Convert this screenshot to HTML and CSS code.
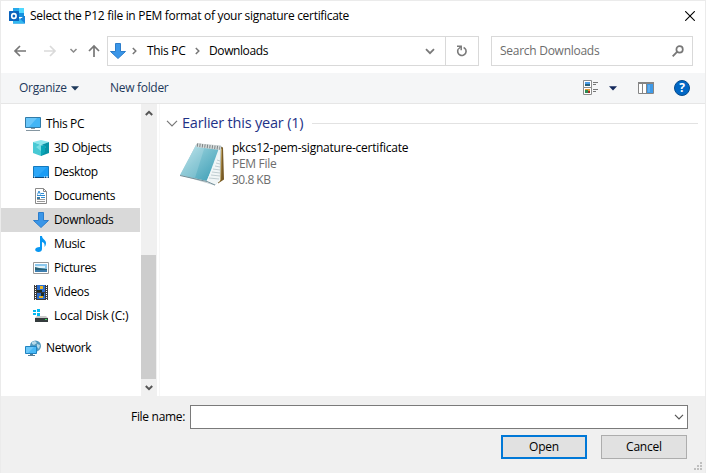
FILE: index.html
```html
<!DOCTYPE html>
<html lang="en">
<head>
<meta charset="utf-8">
<title>Select file</title>
<link rel="stylesheet" href="styles.css">
</head>
<body>
<div class="dialog">
  <header class="titlebar">
    <svg class="app-icon" width="16" height="16" viewBox="0 0 16 16"><path fill="#1490df" d="M4 0h11v9H4z"/><path fill="#28a8ea" d="M4 0h6v4H4z"/><path fill="#50d9ff" d="M10 0h5v5h-5z"/><path fill="#0364b8" d="M4 4h6v4H4z"/><path fill="#123b6d" d="M4 8l6 4 6-4v3H4z"/><path fill="#1784d9" d="M4 15l12-7v7.6H4z"/><path fill="#32b8f0" d="M4 13l6-3 6 5.6H4z"/><rect y="3" width="10" height="10" rx=".6" fill="#0a63bd"/><ellipse cx="4.9" cy="8" rx="2.2" ry="2.4" fill="none" stroke="#fff" stroke-width="1.6"/></svg>
    <h1 class="title">Select the P12 file in PEM format of your signature certificate</h1>
    <svg class="close" width="10" height="10" viewBox="0 0 10 10"><path d="M.2.2l9.6 9.6M9.8.2L.2 9.8" stroke="#000" stroke-width="1.1"/></svg>
  </header>

  <nav class="navbar">
    <svg class="arrows" width="90" height="16" viewBox="0 0 90 16" fill="none"><path d="M13 8H2M7 3L2 8l5 5" stroke="#777" stroke-width="1.7"/><path d="M31 8h11M37 3l5 5-5 5" stroke="#dadada" stroke-width="1.7"/><path d="M57.5 6l3 3 3-3" stroke="#8a8a8a" stroke-width="1.5"/><path d="M81 14V3M76 8l5-5 5 5" stroke="#777" stroke-width="1.7"/></svg>
    <div class="address">
      <svg class="down-arrow" width="16" height="16" viewBox="0 0 16 16"><path d="M5.5.5h5v8h5L8 15.5.5 8.500h5z" fill="#3a96e8" stroke="#2c7dcb"/></svg>
      <svg class="crumb-sep sep-first" width="5" height="8" viewBox="0 0 5 8"><path d="M.8 1l3 3-3 3" fill="none" stroke="#777" stroke-width="1.5"/></svg>
      <span class="crumb pc">This PC</span>
      <svg class="crumb-sep" width="5" height="8" viewBox="0 0 5 8"><path d="M.8 1l3 3-3 3" fill="none" stroke="#777" stroke-width="1.5"/></svg>
      <span class="crumb dl">Downloads</span>
      <svg class="address-caret" width="10" height="7" viewBox="0 0 10 7"><path d="M1 1.200l4 4 4-4" fill="none" stroke="#7a7a7a" stroke-width="1.8"/></svg>
      <span class="refresh"><svg width="12" height="12" viewBox="0 0 12 12"><path d="M7.600 2.400A4.200 4.200 0 1 1 2.200 4.200" fill="none" stroke="#7a7a7a" stroke-width="1.600"/><path d="M1 1.200h4.200V5.200" stroke="#7a7a7a" stroke-width="1.500" fill="none"/><path d="M2.200 4.200L5 1.500" stroke="#7a7a7a" stroke-width="1.200"/></svg></span>
    </div>
    <div class="search">
      <span class="placeholder">Search Downloads</span>
      <svg width="12" height="12" viewBox="0 0 12 12"><circle cx="7.600" cy="4.400" r="3.200" fill="none" stroke="#777" stroke-width="1.700"/><path d="M5.300 6.700L.7 11.300" stroke="#777" stroke-width="1.900"/></svg>
    </div>
  </nav>

  <div class="toolbar">
    <span class="tool organize">Organize</span>
    <svg class="organize-caret" width="8" height="5" viewBox="0 0 8 5"><path d="M0 .3h8L4 4.600z" fill="#1e395b"/></svg>
    <span class="tool new-folder">New folder</span>
    <svg class="view-icon" width="16" height="16" viewBox="0 0 16 16"><path d="M.5.5h8v7h-8zM.5 7.500h8v7h-8z" fill="#fff" stroke="#8c8c8c"/><path fill="#4d9de8" d="M2 2h5v2H2z"/><path fill="#26617c" d="M2 4h5v2H2z"/><path fill="#e29b34" d="M2 9h5v4H2z"/><path fill="#2c8b52" d="M2 10h3v3H2z"/><path fill="#a12e28" d="M5 11h2v2H5z"/><path d="M10 2.500h5M10 4.500h3M10 9.500h5M10 11.500h3" stroke="#777"/></svg>
    <svg class="view-caret" width="8" height="5" viewBox="0 0 8 5"><path d="M0 .3h8L4 4.600z" fill="#14295c"/></svg>
    <svg class="pane-icon" width="16" height="12" viewBox="0 0 16 12"><path fill="#fff" stroke="#858585" d="M.5.5h15v11H.5z"/><path fill="#858585" d="M0 0h16v2H0zM4 2h1v9H4zM8 2h1v9H8z"/><path fill="#3e9ae8" d="M9 2h6v9H9z"/><path fill="#5fadf0" d="M10 3h2v7h-2z"/></svg>
    <span class="help">?</span>
  </div>

  <main class="content">
    <aside class="sidebar">
      <ul class="tree">
        <li class="node root"><svg width="16" height="16" viewBox="0 0 16 16"><path fill="#43b5f5" stroke="#317ba8" d="M.5 1.500h15v10H.5z"/><path fill="#85d2fb" d="M1 2h11L4 11H1z" opacity=".6"/><path fill="#8596a1" d="M6 12h4v1H6zM1 14h14v1H1z"/></svg><span>This PC</span></li>
        <li class="node"><svg width="16" height="16" viewBox="0 0 16 16"><path fill="#8be6ed" d="M0 2l8-2 8 2-8 3z"/><path fill="#48c9d4" d="M0 2l8 3v11l-8-3z"/><path fill="#0792a5" d="M16 2L8 5v11l8-3z"/><path fill="#a4f0f3" d="M3 7l5-3 5 3-5 4z" opacity=".55"/><path fill="#0aa6b8" d="M8 6l4-1v7l-4 4z"/></svg><span>3D Objects</span></li>
        <li class="node"><svg width="16" height="16" viewBox="0 0 16 16"><path fill="#1a9cf5" stroke="#1479bd" d="M.5 2.500h15v11H.5z"/><path fill="#3fb1fb" d="M1 3h13L5 12H1z" opacity=".5"/><path fill="#0a477c" d="M0 13h16v1H0z"/><path fill="#fff" d="M1 12.500h1v1H1zM11 12.500h1v1h-1zM13 12.500h2v1h-2z"/></svg><span>Desktop</span></li>
        <li class="node"><svg width="16" height="16" viewBox="0 0 16 16"><path fill="#fff" stroke="#8a8a8a" d="M2.500.5h8l3 3v12h-11z"/><path fill="none" stroke="#8a8a8a" d="M10.500.5v3h3"/><path d="M4.500 6.500L6 3l1.500 3.500M8 5.500h3M4 7.500h8M8 9.500h4" fill="none" stroke="#2e8bd3"/><path fill="#39799f" d="M4 9h3v2H4z"/><path d="M4 11.500h8M4 13.500h8" stroke="#999"/></svg><span>Documents</span></li>
        <li class="node selected"><svg width="16" height="16" viewBox="0 0 16 16"><path d="M5.500.5h5v8h5L8 15.500.5 8.500h5z" fill="#3a96e8" stroke="#2c7dcb"/></svg><span>Downloads</span></li>
        <li class="node"><svg width="16" height="16" viewBox="0 0 16 16"><path fill="#0897f2" d="M7 0h2c0 3 4 4 4 7 0 2-.8 3-1.500 4C12 8 11 6.500 9 6v7c0 2-1.500 3-3.500 3S2 15 2.200 13.500 4 11 7 11z"/></svg><span>Music</span></li>
        <li class="node"><svg width="16" height="16" viewBox="0 0 16 16"><path fill="#fff" stroke="#999" d="M.5 2.500h15v11H.5z"/><path fill="#8cc8ee" d="M2 4h12v8H2z"/><path fill="#e0f2fa" d="M2 6h10v2H2z"/><path fill="#286074" d="M2 7l4 1 8 1v1H2z"/><path fill="#3d7eae" d="M2 10h12v2H2z"/></svg><span>Pictures</span></li>
        <li class="node"><svg width="16" height="16" viewBox="0 0 16 16"><path fill="#3c3c3c" d="M1 1h14v15H1z"/><path fill="#2b6dcd" d="M4 1h8v7H4zM4 9h8v6H4z"/><path fill="#e5b528" d="M7 2h3v3H7zM6 12h4v2H6z"/><path fill="#1b2d28" d="M4 6h5v2H4zM8 9h3v3H8z"/><path d="M2.500 1v15M13.500 1v15" stroke="#fff" stroke-dasharray="1 1"/></svg><span>Videos</span></li>
        <li class="node disk"><svg width="16" height="16" viewBox="0 0 16 16"><path fill="#04b9f1" d="M0 2h3v2H0zM4 1h3v3H4zM0 5h3v2H0zM4 5h3v3H4z"/><path fill="#c9c9c9" d="M4 8h9l2 2H2z"/><path fill="#343b3d" d="M2 10h13v4H2z"/><path fill="#37e35b" d="M12 11h2v1h-2z"/></svg><span>Local Disk (C:)</span></li>
        <li class="node root network"><svg width="16" height="16" viewBox="0 0 16 16"><circle cx="10.500" cy="6" r="5.500" fill="#5198bd"/><path fill="#b9dae9" d="M7 2l3-1 2 2-3 2-2-1zM12 4l3 1-1 4-2-2z"/><path fill="#48b8f6" stroke="#2083c0" d="M.5 6.500h11v7H.5z"/><path fill="#8bd6fb" d="M1 7h8l-6 6H1z" opacity=".55"/><path fill="#527e99" d="M5 14h3v1H5zM3 15h7v1H3z"/></svg><span>Network</span></li>
      </ul>
    </aside>
    <div class="scrollbar">
      <svg class="scroll-btn" width="8" height="6" viewBox="0 0 8 6"><path d="M.8 5L4 1.800 7.200 5" fill="none" stroke="#555" stroke-width="2"/></svg>
      <div class="thumb"></div>
      <svg class="scroll-btn" width="8" height="6" viewBox="0 0 8 6"><path d="M.8 1L4 4.200 7.200 1" fill="none" stroke="#555" stroke-width="2"/></svg>
    </div>
    <section class="files">
      <div class="group">
        <svg width="12" height="7" viewBox="0 0 12 7"><path d="M1 .8l5 5 5-5" fill="none" stroke="#777" stroke-width="1.200"/></svg>
        <h2 class="group-name">Earlier this year (1)</h2>
        <span class="rule"></span>
      </div>
      <article class="file">
        <svg width="46" height="44" viewBox="0 0 46 44">
          <defs><linearGradient id="cover" x1="0" y1="0" x2="1" y2="1"><stop offset="0" stop-color="#b9e3eb"/><stop offset=".45" stop-color="#79c0cf"/><stop offset="1" stop-color="#389bb4"/></linearGradient></defs>
          <path fill="#795c27" d="M39 4l4 1.500 1 32-6 4z"/><path fill="#c9a453" d="M39 6l3 1-1 31-4 3z"/>
          <path fill="#eef4f5" stroke="#9eadb2" stroke-width=".6" d="M17 2l24 2-1 34-5 5L1 33z"/>
          <path fill="url(#cover)" d="M16 3l23 3-12 33L0 33z"/>
          <path fill="#fff" opacity=".16" d="M16 3l9 1-10 32-15-3z"/>
          <path fill="#f1f6f7" d="M39 12l1 27-5 4-9-3z"/>
          <path d="M37 18l3 1M36 21l4 1M35 24l5 1M33 27l7 1M32 30l8 1M31 33l9 1M29 36l10 1" stroke="#b4c3c8" stroke-width=".8"/>
          <path fill="#d8dddd" d="M17 1l23 3v4L16 5z"/>
          <path d="M17 3l23 3" stroke="#7b8385" stroke-width="3.500" stroke-dasharray="1 1.500"/>
          <path d="M0 33.500l27 6 8 3.500" fill="none" stroke="#738f99"/>
        </svg>
        <div class="file-text">
          <div class="file-name">pkcs12-pem-signature-certificate</div>
          <div class="meta type">PEM File</div>
          <div class="meta size">30.8 KB</div>
        </div>
      </article>
    </section>
  </main>

  <footer class="footer">
    <div class="name-row">
      <span class="label">File name:</span>
      <div class="combo"><svg width="10" height="6" viewBox="0 0 10 6"><path d="M1 .8l4 4 4-4" fill="none" stroke="#555" stroke-width="1.200"/></svg></div>
    </div>
    <div class="buttons">
      <button class="btn primary">Open</button>
      <button class="btn">Cancel</button>
    </div>
    <svg class="grip" width="8" height="8" viewBox="0 0 8 8"><path fill="#bfbfbf" d="M6 0h2v2H6zM3 3h2v2H3zM6 3h2v2H6zM0 6h2v2H0zM3 6h2v2H3zM6 6h2v2H6z"/></svg>
  </footer>
</div>
</body>
</html>
```
FILE: styles.css
```css
* { box-sizing: border-box; }
body { margin: 0; font: 12px/16px "Open Sans", "Noto Sans", sans-serif; color: #000; overflow: hidden; }
svg { display: block; flex: none; }
h1, h2, ul { margin: 0; padding: 0; font: inherit; }
span, h1, h2 { white-space: nowrap; }

.dialog { width: 706px; height: 473px; display: flex; flex-direction: column; background: #fff; border: 1px solid #ebebeb; border-bottom: 0; }

.titlebar { height: 30px; display: flex; align-items: center; padding: 0 10px 0 8px; }
.title { margin-left: 5px; flex: 1; letter-spacing: -0.305px; }

.navbar { height: 42px; display: flex; align-items: center; padding: 0 12px 3px 12px; }
.arrows { margin-right: 4px; }
.address { width: 372px; height: 30px; border: 1px solid #d9d9d9; display: flex; align-items: center; padding-left: 2px; }
.sep-first { margin-left: 6px; }
.crumb-sep { margin-top: 1px; }
.crumb { letter-spacing: -0.3px; }
.crumb.pc { width: 38px; margin: 0 10px 0 10px; }
.crumb.dl { margin-left: 9px; letter-spacing: -0.4px; }
.address-caret { margin-left: auto; margin-right: 10px; margin-top: 2px; }
.refresh { width: 33px; height: 28px; border-left: 1px solid #d9d9d9; display: flex; align-items: center; justify-content: center; }
.search { width: 202px; height: 30px; margin-left: 12px; border: 1px solid #d9d9d9; display: flex; align-items: center; justify-content: space-between; padding: 0 8px; color: #6d6d6d; }
.placeholder { letter-spacing: -0.45px; }
.placeholder { letter-spacing: -0.27px; }

.toolbar { height: 31px; background: #f5f6f7; border-bottom: 1px solid #e6e6e6; display: flex; align-items: center; padding: 0 15px 0 18px; color: #1e395b; }
.organize { width: 47px; letter-spacing: -0.3px; }
.organize-caret { margin-left: 5px; margin-right: 31px; }
.new-folder { flex: 1; letter-spacing: -0.3px; }
.view-caret { margin: 0 21px 0 10px; }
.help { width: 16px; height: 16px; margin-left: 20px; border-radius: 50%; background: #0067c5; border: 1px solid #064b8c; color: #fff; font-weight: 700; font-size: 12px; line-height: 14px; text-align: center; }

.content { height: 292px; display: flex; }
.sidebar { width: 140px; padding-top: 8px; }
.tree { list-style: none; }
.node { height: 24px; width: 139px; display: flex; align-items: center; gap: 5px; padding-left: 32px; letter-spacing: -0.35px; }
.node.root { padding-left: 24px; }
.node.selected { background: #d9d9d9; }
.node.disk { letter-spacing: -0.15px; }
.node.network { margin-top: 8px; }
.scrollbar { width: 16px; background: #f0f0f0; display: flex; flex-direction: column; align-items: center; padding: 6px 1px 0 0; }
.thumb { width: 15px; height: 124px; background: #cdcdcd; margin: 139px 0 6px; }
.files { flex: 1; border-left: 1px solid #f7f7f7; margin-left: 2px; padding: 8px 7px 0 6px; }
.group { height: 22px; display: flex; align-items: center; }
.group-name { margin-left: 4px; font-size: 14.500px; line-height: 20px; color: #1e3287; letter-spacing: -0.2px; width: 130px; }
.rule { flex: 1; height: 1px; background: #e2e2e2; }
.file { display: flex; margin: 6px 0 0 14px; }
.file svg { margin-top: 2px; }
.file-text { margin-left: 6px; }
.file-name { letter-spacing: -0.22px; }
.meta { color: #6d6d6d; letter-spacing: -0.3px; }
.meta.size { letter-spacing: -0.5px; }

.footer { flex: 1; background: #f0f0f0; position: relative; padding: 9px 17px 0 0; }
.name-row { display: flex; justify-content: flex-end; align-items: center; }
.label { width: 54px; margin-right: 5px; letter-spacing: -0.3px; }
.combo { width: 498px; height: 24px; background: #fff; border: 1px solid #7a7a7a; display: flex; align-items: center; justify-content: flex-end; padding-right: 3px; }
.buttons { display: flex; justify-content: flex-end; gap: 14px; margin: 6px 1px 0 0; }
.btn { width: 86px; height: 24px; padding: 0; font: inherit; color: #000; background: #e1e1e1; border: 1px solid #adadad; letter-spacing: -0.2px; }
.btn.primary { border: 2px solid #0078d7; }
.grip { position: absolute; right: 3px; bottom: 3px; }
```
